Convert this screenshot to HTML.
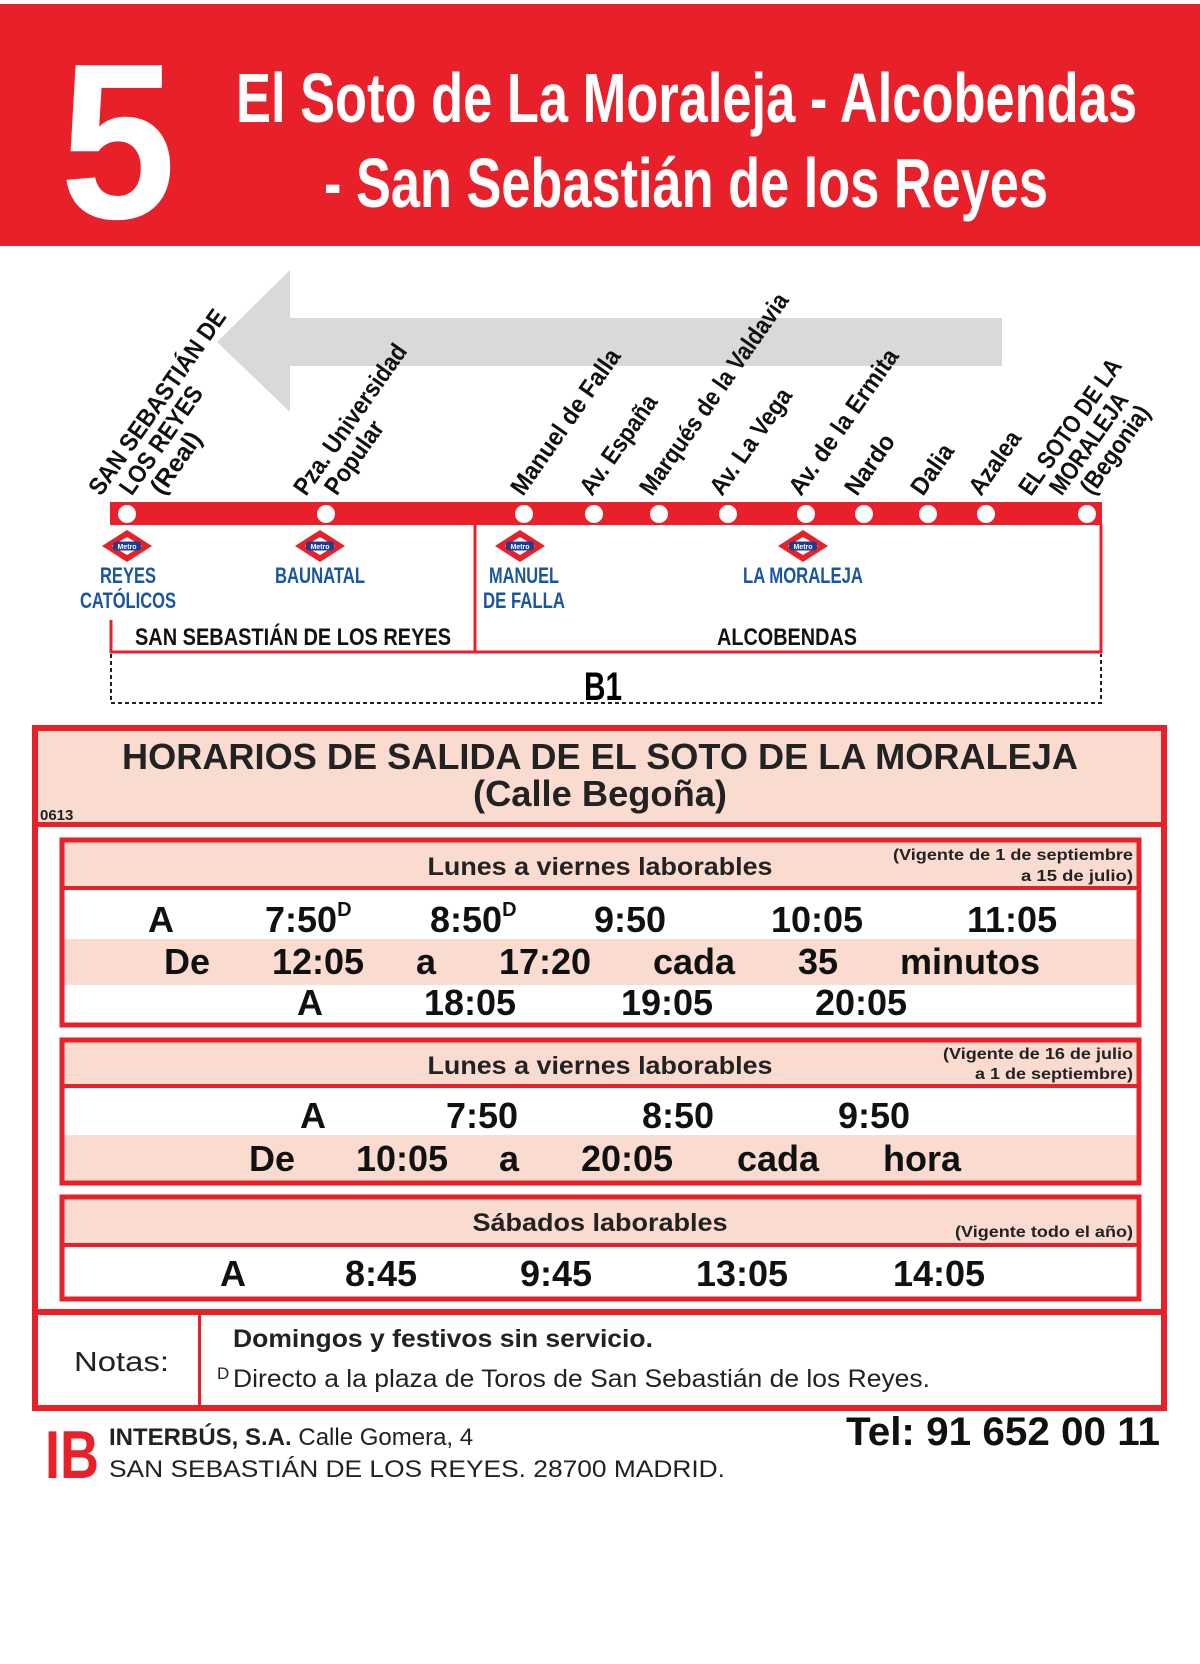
<!DOCTYPE html>
<html><head><meta charset="utf-8"><style>
html,body{margin:0;padding:0;background:#fff}
svg{display:block}
text{font-family:"Liberation Sans",sans-serif}
.b{font-weight:bold}
</style></head><body>
<svg width="1200" height="1664" viewBox="0 0 1200 1664" xmlns="http://www.w3.org/2000/svg">
<defs>
<g id="metro">
<path d="M0,-16 L25,0 L0,16 L-25,0 Z" fill="#e8202a"/>
<path d="M0,-9 L15,0 L0,9 L-15,0 Z" fill="#fff"/>
<rect x="-14" y="-4.5" width="28" height="9" rx="3" fill="#1b3f94"/>
<text x="0" y="3" font-size="7" fill="#fff" text-anchor="middle" class="b">Metro</text>
</g>
</defs>
<rect x="0" y="4" width="1200" height="242" fill="#e8202a"/>
<text x="60" y="218" font-size="222" class="b" fill="#fff" textLength="116" lengthAdjust="spacingAndGlyphs">5</text>
<text x="236" y="122" font-size="70" class="b" fill="#fff" textLength="901" lengthAdjust="spacingAndGlyphs">El Soto de La Moraleja - Alcobendas</text>
<text x="324" y="207" font-size="70" class="b" fill="#fff" textLength="724" lengthAdjust="spacingAndGlyphs">- San Sebastián de los Reyes</text>

<path d="M1002,318 L290,318 L290,270 L217,342 L290,412 L290,366 L1002,366 Z" fill="#d9d9d9"/>

<g font-size="25" class="b" fill="#111">
<g transform="translate(101,497) rotate(-55)"><text x="0" y="0" textLength="220" lengthAdjust="spacingAndGlyphs">SAN SEBASTIÁN DE</text><text x="18" y="25" textLength="126" lengthAdjust="spacingAndGlyphs">LOS REYES</text><text x="36" y="50" textLength="70" lengthAdjust="spacingAndGlyphs">(Real)</text></g>
<g transform="translate(306,497) rotate(-55)"><text x="0" y="0" textLength="178" lengthAdjust="spacingAndGlyphs">Pza. Universidad</text><text x="18" y="25" textLength="84" lengthAdjust="spacingAndGlyphs">Popular</text></g>
<g transform="translate(523,497) rotate(-55)"><text x="0" y="0" textLength="172" lengthAdjust="spacingAndGlyphs">Manuel de Falla</text></g>
<g transform="translate(592,497) rotate(-55)"><text x="0" y="0" textLength="116" lengthAdjust="spacingAndGlyphs">Av. España</text></g>
<g transform="translate(652,497) rotate(-55)"><text x="0" y="0" textLength="240" lengthAdjust="spacingAndGlyphs">Marqués de la Valdavia</text></g>
<g transform="translate(722,497) rotate(-55)"><text x="0" y="0" textLength="124" lengthAdjust="spacingAndGlyphs">Av. La Vega</text></g>
<g transform="translate(801,497) rotate(-55)"><text x="0" y="0" textLength="172" lengthAdjust="spacingAndGlyphs">Av. de la Ermita</text></g>
<g transform="translate(857,497) rotate(-55)"><text x="0" y="0" textLength="68" lengthAdjust="spacingAndGlyphs">Nardo</text></g>
<g transform="translate(923,497) rotate(-55)"><text x="0" y="0" textLength="56" lengthAdjust="spacingAndGlyphs">Dalia</text></g>
<g transform="translate(981,497) rotate(-55)"><text x="0" y="0" textLength="72" lengthAdjust="spacingAndGlyphs">Azalea</text></g>
<g transform="translate(1031,497) rotate(-55)"><text x="0" y="0" textLength="160" lengthAdjust="spacingAndGlyphs">EL SOTO DE LA</text><text x="18" y="25" textLength="118" lengthAdjust="spacingAndGlyphs">MORALEJA</text><text x="36" y="50" textLength="102" lengthAdjust="spacingAndGlyphs">(Begonia)</text></g>
</g>

<rect x="110" y="502" width="992" height="23" fill="#e8202a"/>
<g fill="#fff">
<circle cx="127" cy="514" r="9"/><circle cx="326" cy="514" r="9"/><circle cx="524" cy="514" r="9"/><circle cx="594" cy="514" r="9"/><circle cx="659" cy="514" r="9"/><circle cx="728" cy="514" r="9"/><circle cx="806" cy="514" r="9"/><circle cx="864" cy="514" r="9"/><circle cx="928" cy="514" r="9"/><circle cx="986" cy="514" r="9"/><circle cx="1087" cy="514" r="9"/>
</g>
<g stroke="#e8202a" stroke-width="3" fill="none">
<path d="M111,620 L111,652 L1101,652 L1101,525"/>
<path d="M475,525 L475,652"/>
</g>
<g stroke="#222" stroke-width="2" stroke-dasharray="4,3" fill="none">
<path d="M111,654 L111,703 L1101,703 L1101,654"/>
</g>
<text x="603" y="700" font-size="40" class="b" text-anchor="middle" textLength="38" lengthAdjust="spacingAndGlyphs">B1</text>

<use href="#metro" x="127" y="546"/>
<use href="#metro" x="320" y="546"/>
<use href="#metro" x="520" y="546"/>
<use href="#metro" x="803" y="546"/>
<g font-size="22" class="b" fill="#1a56a0" text-anchor="middle">
<text x="128" y="583" textLength="56" lengthAdjust="spacingAndGlyphs">REYES</text>
<text x="128" y="608" textLength="96" lengthAdjust="spacingAndGlyphs">CATÓLICOS</text>
<text x="320" y="583" textLength="90" lengthAdjust="spacingAndGlyphs">BAUNATAL</text>
<text x="524" y="583" textLength="70" lengthAdjust="spacingAndGlyphs">MANUEL</text>
<text x="524" y="608" textLength="82" lengthAdjust="spacingAndGlyphs">DE FALLA</text>
<text x="803" y="583" textLength="120" lengthAdjust="spacingAndGlyphs">LA MORALEJA</text>
</g>
<g font-size="24" class="b" fill="#111" text-anchor="middle">
<text x="293" y="645" textLength="316" lengthAdjust="spacingAndGlyphs">SAN SEBASTIÁN DE LOS REYES</text>
<text x="787" y="645" textLength="140" lengthAdjust="spacingAndGlyphs">ALCOBENDAS</text>
</g>

<rect x="35" y="728" width="1129" height="680" fill="#fff" stroke="#e8202a" stroke-width="6"/>
<rect x="38" y="731" width="1123" height="91" fill="#fadbd0"/>
<rect x="38" y="822" width="1123" height="5" fill="#e8202a"/>
<text x="600" y="769" font-size="36" class="b" fill="#222" text-anchor="middle" textLength="956" lengthAdjust="spacingAndGlyphs">HORARIOS DE SALIDA DE EL SOTO DE LA MORALEJA</text>
<text x="600" y="806" font-size="36" class="b" fill="#222" text-anchor="middle" textLength="254" lengthAdjust="spacingAndGlyphs">(Calle Begoña)</text>
<text x="40" y="820" font-size="15" class="b" fill="#222">0613</text>

<rect x="62" y="840" width="1077" height="185" fill="#fff" stroke="#e8202a" stroke-width="5"/>
<rect x="64.5" y="842.5" width="1072" height="44" fill="#fadbd0"/>
<rect x="64.5" y="886" width="1072" height="4" fill="#e8202a"/>
<rect x="64.5" y="939" width="1072" height="46" fill="#fadbd0"/>
<text x="600" y="875" font-size="25" class="b" fill="#222" text-anchor="middle" textLength="345" lengthAdjust="spacingAndGlyphs">Lunes a viernes laborables</text>
<g font-size="16" class="b" fill="#222" text-anchor="end">
<text x="1133" y="860" textLength="240" lengthAdjust="spacingAndGlyphs">(Vigente de 1 de septiembre</text>
<text x="1133" y="881" textLength="112" lengthAdjust="spacingAndGlyphs">a 15 de julio)</text>
</g>
<g font-size="36" class="b" fill="#111">
<text x="148" y="932">A</text>
<text x="265" y="932">7:50<tspan font-size="20" dy="-16">D</tspan></text>
<text x="430" y="932">8:50<tspan font-size="20" dy="-16">D</tspan></text>
<text x="594" y="932">9:50</text>
<text x="771" y="932">10:05</text>
<text x="967" y="932">11:05</text>
<text x="164" y="974">De</text>
<text x="272" y="974">12:05</text>
<text x="416" y="974">a</text>
<text x="499" y="974">17:20</text>
<text x="653" y="974">cada</text>
<text x="798" y="974">35</text>
<text x="900" y="974">minutos</text>
<text x="297" y="1015">A</text>
<text x="424" y="1015">18:05</text>
<text x="621" y="1015">19:05</text>
<text x="815" y="1015">20:05</text>
</g>

<rect x="62" y="1040" width="1077" height="143" fill="#fff" stroke="#e8202a" stroke-width="5"/>
<rect x="64.5" y="1042.5" width="1072" height="42" fill="#fadbd0"/>
<rect x="64.5" y="1084" width="1072" height="4" fill="#e8202a"/>
<rect x="64.5" y="1135" width="1072" height="45.5" fill="#fadbd0"/>
<text x="600" y="1074" font-size="25" class="b" fill="#222" text-anchor="middle" textLength="345" lengthAdjust="spacingAndGlyphs">Lunes a viernes laborables</text>
<g font-size="16" class="b" fill="#222" text-anchor="end">
<text x="1133" y="1059" textLength="190" lengthAdjust="spacingAndGlyphs">(Vigente de 16 de julio</text>
<text x="1133" y="1079" textLength="158" lengthAdjust="spacingAndGlyphs">a 1 de septiembre)</text>
</g>
<g font-size="36" class="b" fill="#111">
<text x="300" y="1128">A</text>
<text x="446" y="1128">7:50</text>
<text x="642" y="1128">8:50</text>
<text x="838" y="1128">9:50</text>
<text x="249" y="1171">De</text>
<text x="356" y="1171">10:05</text>
<text x="499" y="1171">a</text>
<text x="581" y="1171">20:05</text>
<text x="737" y="1171">cada</text>
<text x="883" y="1171">hora</text>
</g>

<rect x="62" y="1197" width="1077" height="102" fill="#fff" stroke="#e8202a" stroke-width="5"/>
<rect x="64.5" y="1199.5" width="1072" height="44" fill="#fadbd0"/>
<rect x="64.5" y="1243" width="1072" height="4" fill="#e8202a"/>
<text x="600" y="1231" font-size="25" class="b" fill="#222" text-anchor="middle" textLength="255" lengthAdjust="spacingAndGlyphs">Sábados laborables</text>
<text x="1133" y="1237" font-size="16" class="b" fill="#222" text-anchor="end" textLength="178" lengthAdjust="spacingAndGlyphs">(Vigente todo el año)</text>
<g font-size="36" class="b" fill="#111">
<text x="220" y="1286">A</text>
<text x="345" y="1286">8:45</text>
<text x="520" y="1286">9:45</text>
<text x="696" y="1286">13:05</text>
<text x="893" y="1286">14:05</text>
</g>

<rect x="38" y="1309" width="1123" height="6" fill="#e8202a"/>
<rect x="198" y="1315" width="3" height="91" fill="#e8202a"/>
<text x="74" y="1371" font-size="28" fill="#222" textLength="95" lengthAdjust="spacingAndGlyphs">Notas:</text>
<text x="233" y="1347" font-size="25" class="b" fill="#222" textLength="420" lengthAdjust="spacingAndGlyphs">Domingos y festivos sin servicio.</text>
<text x="217" y="1379" font-size="17" fill="#222">D</text>
<text x="233" y="1387" font-size="25" fill="#222" textLength="697" lengthAdjust="spacingAndGlyphs">Directo a la plaza de Toros de San Sebastián de los Reyes.</text>

<text x="45" y="1478" font-size="68" class="b" fill="#e8202a" textLength="54" lengthAdjust="spacingAndGlyphs">IB</text>
<text x="109" y="1445" font-size="24" fill="#222"><tspan class="b">INTERBÚS, S.A.</tspan> Calle Gomera, 4</text>
<text x="109" y="1477" font-size="24" fill="#222" textLength="616" lengthAdjust="spacingAndGlyphs">SAN SEBASTIÁN DE LOS REYES. 28700 MADRID.</text>
<text x="846" y="1445" font-size="40" class="b" fill="#111" textLength="314" lengthAdjust="spacingAndGlyphs">Tel: 91 652 00 11</text>
</svg>
</body></html>
